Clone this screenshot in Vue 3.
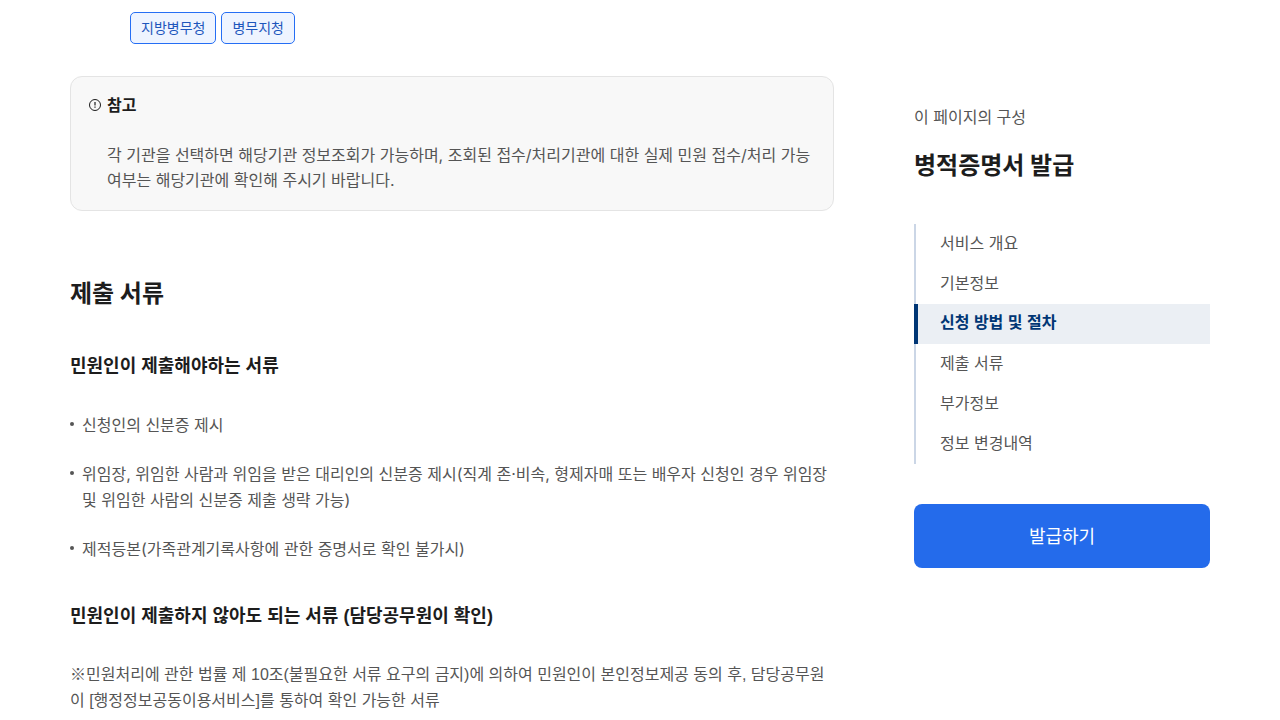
<script setup>
const offices = ['지방병무청', '병무지청']
const sections = ['서비스 개요', '기본정보', '신청 방법 및 절차', '제출 서류', '부가정보', '정보 변경내역']
const current = 2
const documents = [
  '신청인의 신분증 제시',
  '위임장, 위임한 사람과 위임을 받은 대리인의 신분증 제시(직계 존·비속, 형제자매 또는 배우자 신청인 경우 위임장 및 위임한 사람의 신분증 제출 생략 가능)',
  '제적등본(가족관계기록사항에 관한 증명서로 확인 불가시)',
]
</script>

<template>
  <div class="page">
    <main class="content">
      <div class="tags">
        <button v-for="o in offices" :key="o" type="button" class="tag">{{ o }}</button>
      </div>
      <section class="note">
        <h4 class="note-title">
          <svg width="14" height="14" viewBox="0 0 14 14" fill="none" stroke="#1d1d1d" aria-hidden="true">
            <circle cx="7" cy="7" r="5.5" /><path d="M7 4v3.6M7 8.6v1.2" stroke-width="1.2" />
          </svg>
          참고
        </h4>
        <p class="note-text">각 기관을 선택하면 해당기관 정보조회가 가능하며, 조회된 접수/처리기관에 대한 실제 민원 접수/처리 가능 여부는 해당기관에 확인해 주시기 바랍니다.</p>
      </section>
      <h2>제출 서류</h2>
      <h3>민원인이 제출해야하는 서류</h3>
      <ul class="docs">
        <li v-for="d in documents" :key="d">{{ d }}</li>
      </ul>
      <h3>민원인이 제출하지 않아도 되는 서류 (담당공무원이 확인)</h3>
      <p class="law">※민원처리에 관한 법률 제 10조(불필요한 서류 요구의 금지)에 의하여 민원인이 본인정보제공 동의 후, 담당공무원이 [행정정보공동이용서비스]를 통하여 확인 가능한 서류</p>
    </main>
    <aside class="side">
      <p class="side-label">이 페이지의 구성</p>
      <h2 class="side-title">병적증명서 발급</h2>
      <nav class="toc">
        <a v-for="(s, i) in sections" :key="s" href="#" :class="{ active: i === current }">{{ s }}</a>
      </nav>
      <button type="button" class="issue">발급하기</button>
    </aside>
  </div>
</template>

<style>
html { overflow: hidden; }
body { background: #fff; }
</style>

<style scoped>
.page {
  display: grid;
  grid-template-columns: minmax(0, 1fr) 296px;
  gap: 80px;
  padding: 12px 70px 0;
  font-family: Inter, "Noto Sans CJK KR", sans-serif;
  font-size: 16px;
  line-height: 26px;
  color: #555;
}
h2, h3, h4, p, ul { margin: 0; padding: 0; }
button { font-family: inherit; cursor: pointer; }
.tags { display: flex; gap: 5px; padding-left: 60px; }
.tag {
  height: 32px;
  padding: 0 10px 2px;
  border: 1px solid #256ef4;
  border-radius: 5px;
  background: #eef4ff;
  color: #1d56bc;
  font-size: 14px;
}
.note {
  margin-top: 32px;
  padding: 15px 20px 17px 17px;
  border: 1px solid #e4e4e4;
  border-radius: 12px;
  background: #f8f8f8;
}
.note-title { display: flex; align-items: center; gap: 5px; color: #1d1d1d; font-size: 16px; }
.note-text { margin: 25px 0 0 19px; line-height: 25px; }
h2 { margin-top: 65px; color: #1d1d1d; font-size: 24px; line-height: 36px; }
h3 { margin-top: 40px; color: #1d1d1d; font-family: "Liberation Sans", "Noto Sans CJK KR", sans-serif; font-size: 18px; line-height: 28px; }
.docs { margin-top: 32px; list-style: none; }
.docs li { position: relative; margin-bottom: 23px; padding-left: 12px; }
.docs li::before {
  content: "";
  position: absolute;
  top: 10px;
  left: 0;
  width: 4px;
  height: 4px;
  border-radius: 50%;
  background: #555;
}
.law { margin-top: 32px; font-family: "Liberation Sans", "Noto Sans CJK KR", sans-serif; }
.side { padding-top: 92px; }
.side-title { margin-top: 18px; }
.toc { display: flex; flex-direction: column; margin-top: 40px; }
.toc a {
  padding: 0 0 2px 24px;
  border-left: 2px solid #cbd6e6;
  color: #555;
  line-height: 38px;
  text-decoration: none;
}
.toc .active {
  padding-left: 22px;
  border-left: 4px solid #003675;
  background: #ebeff4;
  color: #003675;
  font-family: "Liberation Sans", "Noto Sans CJK KR", sans-serif;
  font-weight: 700;
}
.issue {
  width: 100%;
  height: 64px;
  margin-top: 40px;
  padding: 0 0 2px;
  border: 0;
  border-radius: 8px;
  background: #246beb;
  color: #fff;
  font-size: 18px;
}
</style>
